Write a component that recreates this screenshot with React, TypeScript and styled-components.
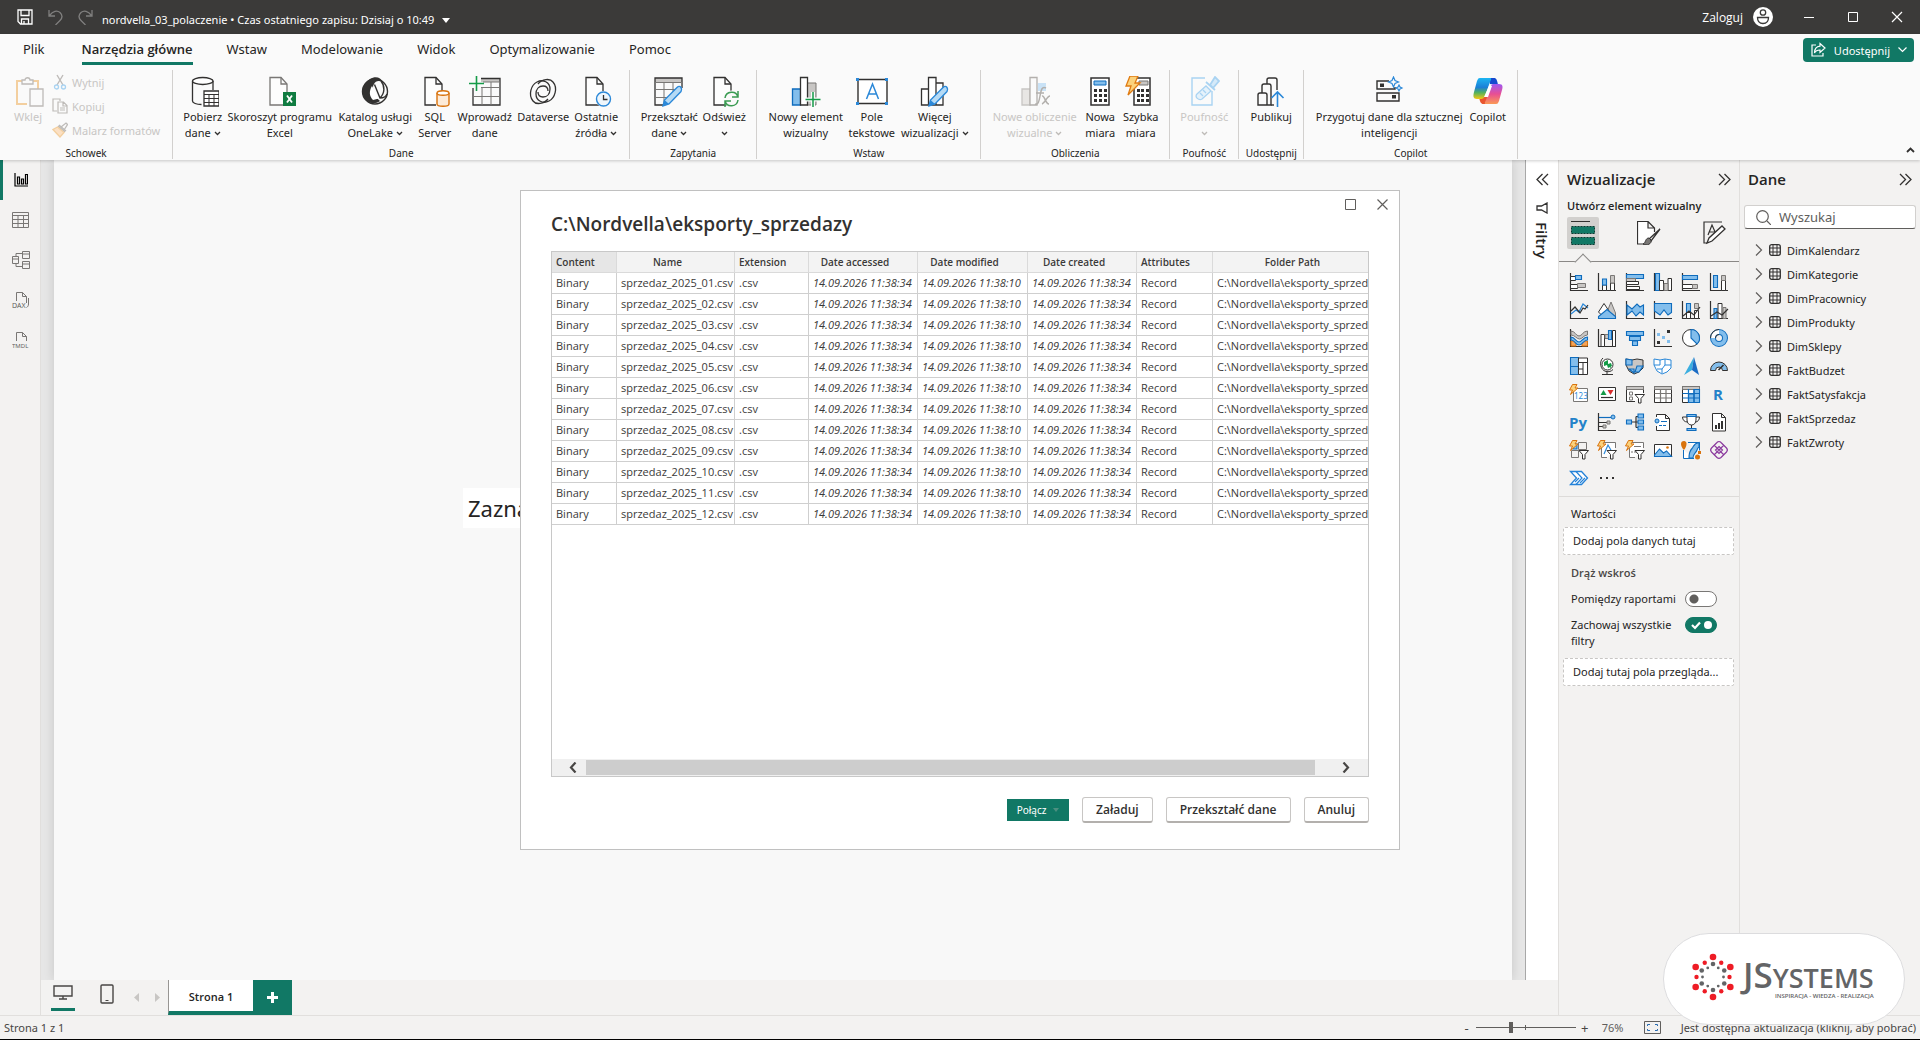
import React from "react";
import styled, { createGlobalStyle, css } from "styled-components";

const FONT = '"Noto Sans", "Open Sans", sans-serif';
const STRONG_FONT = '"Open Sans", "Noto Sans", sans-serif';
const GREEN = "#117865";
const INK = "#323130";
const BLUE = "#0f6cbd";
const SKY = "#83beec";
const GREY = "#c8c6c4";
const MID = "#797775";
const ORANGE = "#d9730d";

const GlobalStyle = createGlobalStyle`
  *, *::before, *::after { box-sizing: border-box; }
  body { margin: 0; font-family: ${FONT}; font-size: 11px; color: #252423; background: #f3f2f1; }
  button, input { font: inherit; color: inherit; }
  button { margin: 0; padding: 0; border: 0; background: none; cursor: pointer; }
  svg { display: block; flex: none; }
`;

const strong = css`
  font-family: ${STRONG_FONT};
  font-weight: 600;
`;

type IconProps = { w: number; h?: number; children: React.ReactNode };
const Icon = ({ w, h = w, children }: IconProps) => (
  <svg width={w} height={h} viewBox={`0 0 ${w} ${h}`} fill="none" aria-hidden="true">
    {children}
  </svg>
);

/* ---------- Shell ---------- */

const Shell = styled.div`
  display: flex;
  flex-direction: column;
  height: 100vh;
  overflow: hidden;
  background: #f3f2f1;
`;

const TitleBar = styled.header`
  display: flex;
  align-items: center;
  height: 34px;
  padding: 0 17px;
  background: #3b3a39;
  color: #fff;
`;

const QuickActions = styled.div`
  display: flex;
  align-items: center;
  gap: 15px;
`;

const QuickButton = styled.button`
  display: flex;
  opacity: ${(p: { disabled?: boolean }) => (p.disabled ? 0.35 : 1)};
`;

const FileTitle = styled.button`
  display: flex;
  align-items: center;
  gap: 8px;
  margin-left: 9px;
  padding-top: 6px;
  line-height: 16px;
`;

const Account = styled.button`
  display: flex;
  align-items: center;
  gap: 10px;
  margin-left: auto;
  font-family: ${STRONG_FONT};
  font-size: 12px;
`;

const WindowControls = styled.div`
  display: flex;
  align-items: center;
  gap: 32px;
  margin-left: 30px;
`;

const WindowButton = styled.button`
  display: flex;
`;

/* ---------- Ribbon ---------- */

const Ribbon = styled.section`
  position: relative;
  background: #fafafa;
  box-shadow: 0 1px 3px rgba(0, 0, 0, 0.2);
  z-index: 1;
`;

const TabRow = styled.nav`
  display: flex;
  align-items: flex-start;
  gap: 34px;
  height: 36px;
  padding: 0 6px 0 23px;
`;

const RibbonTab = styled.button<{ $active?: boolean; $wide?: boolean }>`
  height: 31px;
  margin-right: ${(p) => (p.$wide ? "3px" : "0")};
  padding-top: 3px;
  font-size: 13px;
  line-height: 25px;
  border-bottom: 3px solid ${(p) => (p.$active ? GREEN : "transparent")};
  ${(p) => p.$active && strong}
`;

const ShareButton = styled.button`
  display: flex;
  align-items: center;
  gap: 8px;
  height: 24px;
  margin: 4px 0 0 auto;
  padding: 0 7px;
  border-radius: 4px;
  background: ${GREEN};
  color: #fff;
`;

const RibbonBody = styled.div`
  display: flex;
  align-items: flex-start;
  height: 90px;
`;

const Group = styled.section<{ $pad?: number }>`
  display: flex;
  flex-direction: column;
  height: 89px;
  padding: 0 ${(p) => p.$pad ?? 8}px;
  border-right: 1px solid #d2d0ce;
`;

const GroupItems = styled.div`
  display: flex;
  flex: 1;
`;

const GroupLabel = styled.h2`
  margin: 0;
  font-size: 10px;
  font-weight: 400;
  line-height: 12px;
  text-align: center;
`;

const BigButton = styled.button<{ $w: number; $off?: boolean }>`
  display: flex;
  flex-direction: column;
  align-items: center;
  gap: 1px;
  width: ${(p) => p.$w}px;
  padding-top: 6px;
  white-space: nowrap;
  line-height: 16px;
  color: ${(p) => (p.$off ? "#c8c6c4" : "#252423")};
`;

const ButtonLine = styled.span`
  display: flex;
  align-items: center;
  justify-content: center;
  gap: 3px;
  height: 16px;
`;

const SmallStack = styled.div`
  display: flex;
  flex-direction: column;
  padding: 0 2px 0 6px;
`;

const SmallButton = styled.button`
  display: flex;
  align-items: center;
  gap: 4px;
  height: 24px;
  color: #c8c6c4;
  white-space: nowrap;
`;

const CollapseButton = styled.button`
  display: flex;
  align-self: flex-end;
  margin: 0 5px 7px auto;
`;

const DownMark = ({ color = INK }: { color?: string }) => (
  <Icon w={7} h={5}>
    <path d="M1 1l2.500 2.500L6 1" stroke={color} strokeWidth="1.300" />
  </Icon>
);

const Doc = ({ color = INK }: { color?: string }) => (
  <>
    <path d="M6 1.500h11l6 6.500v21H6z" fill="#fdfdfd" stroke={color} strokeWidth="1.300" />
    <path d="M17 1.500V8h6" stroke={color} strokeWidth="1.300" />
  </>
);

const Pencil = () => (
  <g transform="translate(9 8)">
    <path d="M1 22l1.500-6L15 3.500c1.500-1.500 3-1.500 4 0s1 2.500 0 4L7 20z" fill="#b5daf5" stroke="#2b88d8" strokeWidth="1.400" />
    <path d="M2.500 16L7 20l-6 2z" fill="#2b88d8" />
  </g>
);

const big: Record<string, React.ReactNode> = {
  paste: (
    <>
      <path d="M15 28H5V5h6M20 5h6v8" stroke="#f3cf9f" strokeWidth="2" />
      <path d="M10 8V4h3c0-3 5-3 5 0h3v4z" fill="#fafafa" stroke="#bebbb8" strokeWidth="1.300" />
      <path d="M18 13h13v17H18z" fill="#fafafa" stroke="#bebbb8" strokeWidth="1.300" />
    </>
  ),
  data: (
    <>
      <path d="M5.500 5v20c0 2 4 3.500 9 3.500M26 5v9" stroke={INK} strokeWidth="1.300" />
      <ellipse cx="15.750" cy="5" rx="10.250" ry="3.500" fill="#fff" stroke={INK} strokeWidth="1.300" />
      <path d="M17 15h15v15H17z" fill="#fff" stroke={INK} strokeWidth="1.300" />
      <path d="M17 18.500h15M17 22.500h15M17 26.500h15M22 18v12M27 18v12" stroke={INK} />
    </>
  ),
  excel: (
    <>
      <Doc color={MID} />
      <path d="M19 16h13v14H19z" fill="#107c41" />
      <path d="M23 19.500l5 7M28 19.500l-5 7" stroke="#fff" strokeWidth="1.800" />
    </>
  ),
  onelake: (
    <>
      <circle cx="16" cy="15.500" r="12.500" stroke={INK} strokeWidth="1.400" />
      <path d="M11 3C16 0 22 1 23.500 6c-4-2-7-1-8.500 2-3 4 1 13 6 17-4 3-9 3-13 0C1 20 2 8 11 3z" fill={INK} />
      <path d="M12.500 9c-4 4-4 11 1 16M15.500 8.500L21 22c3 0 6-1 7-4M22 5c4 5 4 12-1 17" stroke={INK} strokeWidth="1.400" />
      <path d="M13 10c-3 5-3 10 1 14l6-1.500z" fill="#fff" />
    </>
  ),
  sql: (
    <>
      <Doc />
      <path d="M17 17h13v13H17z" fill="#fafafa" />
      <path d="M18 17v11c0 3 12 3 12 0V17" fill="#fdebd8" stroke={ORANGE} strokeWidth="1.400" />
      <ellipse cx="24" cy="17" rx="6" ry="2.300" fill="#fff" stroke={ORANGE} strokeWidth="1.400" />
    </>
  ),
  enter: (
    <>
      <path d="M12 2h19v4H12z" fill={GREY} />
      <path d="M12 2.500h19V29H4V12" stroke={INK} strokeWidth="1.300" />
      <path d="M12 11.500h19M4 20.500h27M13 11v18M22 6v23M14 6h17" stroke={MID} />
      <path d="M7.500 0v15M0 7.500h15" stroke="#159b48" strokeWidth="1.600" />
    </>
  ),
  dataverse: (
    <>
      <path d="M21 23c-4 5-12 6-15 2C1 19 4 9 10 6c6-3 13 0 13 7 0 5-3 8-7 8-3 0-5-2-5-5" stroke={INK} strokeWidth="1.300" />
      <path d="M11 8c4-5 12-6 15-2 5 6 2 16-4 19-6 3-13 0-13-7 0-5 3-8 7-8 3 0 5 2 5 5" stroke={INK} strokeWidth="1.300" />
    </>
  ),
  recent: (
    <>
      <Doc />
      <circle cx="23.500" cy="23" r="8" fill="#fafafa" />
      <circle cx="23.500" cy="23" r="7" fill="#eef6fc" stroke="#2b88d8" strokeWidth="1.400" />
      <path d="M23.500 19v4.500h4" stroke={INK} strokeWidth="1.300" />
    </>
  ),
  transform: (
    <>
      <path d="M2 2h27v4H2z" fill={GREY} />
      <path d="M29 12V2H2v27h9" stroke={INK} strokeWidth="1.300" />
      <path d="M2 6.500h27M2 13.500h20M2 21.500h14M11 6v23M20 6v10" stroke={MID} />
      <Pencil />
    </>
  ),
  refresh: (
    <>
      <Doc />
      <circle cx="23.500" cy="23" r="8.500" fill="#fafafa" />
      <path d="M17 22c1-7 11-8 13-1M30 15v6h-6M30 24c-1 7-11 8-13 1M17 31v-6h6" stroke="#3a9b52" strokeWidth="1.500" />
    </>
  ),
  newVisual: (
    <>
      <path d="M17 7h9v22h-9z" fill={GREY} stroke={MID} />
      <path d="M2.500 13h8v16h-8z" fill={SKY} stroke={BLUE} strokeWidth="1.300" />
      <path d="M10.500 1.500h7V29h-7z" fill="#fff" stroke={INK} strokeWidth="1.300" />
      <path d="M23 16v15M15.500 23.500h15" stroke="#fafafa" strokeWidth="4" />
      <path d="M23 16v15M15.500 23.500h15" stroke="#159b48" strokeWidth="1.500" />
    </>
  ),
  textBox: (
    <>
      <path d="M2 3.500h29v24H2z" fill="#fff" stroke={INK} strokeWidth="1.400" />
      <path d="M0 2h3v3H0zM29 2h3v3h-3zM0 26h3v3H0zM29 26h3v3h-3z" fill="#2b88d8" />
      <path d="M10.500 23L16.500 8l6 15M12.500 18h8" stroke="#2b88d8" strokeWidth="1.500" />
    </>
  ),
  moreVisuals: (
    <>
      <path d="M2.500 13h7v16h-7zM17 7h7v22h-7zM9.500 1.500H17V29H9.500z" fill="#fff" stroke={INK} strokeWidth="1.300" />
      <Pencil />
    </>
  ),
  newCalc: (
    <>
      <path d="M19 7h8v8h-8z" fill="#c9e2f6" />
      <path d="M3 13h8v16H3z" fill="#e8e6e4" stroke={GREY} strokeWidth="1.300" />
      <path d="M11 1.500h7V29h-7z" fill="#fafafa" stroke="#b3b0ad" strokeWidth="1.300" />
      <path d="M27 12c-4-2-5 2-6 8s-2 9-5 8M17 17h8M23 20c3-1 3 8 7 8M31 20c-3 0-5 7-8 8" stroke="#b3b0ad" strokeWidth="1.500" />
    </>
  ),
  measure: (
    <>
      <path d="M7 2h18v27H7z" fill="#fff" stroke={INK} strokeWidth="1.500" />
      <path d="M10 5h12v4H10z" fill={SKY} stroke={BLUE} />
      <path d="M10 13h3v3h-3zM15 13h3v3h-3zM20 13h3v3h-3zM10 18h3v3h-3zM15 18h3v3h-3zM20 18h3v3h-3zM10 23h3v3h-3zM15 23h3v3h-3zM20 23h3v3h-3z" fill={INK} />
    </>
  ),
  quick: (
    <>
      <path d="M9 2h16v27H9z" fill="#fff" stroke={INK} strokeWidth="1.500" />
      <path d="M14 5h9v4h-9z" fill={GREY} stroke={MID} />
      <path d="M12 13h3v3h-3zM16 13h3v3h-3zM21 13h3v3h-3zM12 18h3v3h-3zM16 18h3v3h-3zM21 18h3v3h-3zM12 23h3v3h-3zM16 23h3v3h-3zM21 23h3v3h-3z" fill={INK} />
      <path d="M5 0h8l-3 7h5L3 19l3-9H1z" fill="#fbd27c" stroke="#e07b12" strokeWidth="1.300" />
    </>
  ),
  sensitivity: (
    <>
      <path d="M17 2H4v27h20V15" stroke="#a9d3f2" strokeWidth="1.400" />
      <path d="M9 18l9-8 5 5-9 8c-3 2-8-2-5-5z" fill="#e5f2fb" stroke="#a9d3f2" strokeWidth="1.300" />
      <path d="M12 17l3 3M15 14l3 3" stroke="#a9d3f2" strokeWidth="1.300" />
      <path d="M18 6l9 8M22 9l5-8 4 4-6 7z" fill="#d5eaf9" stroke="#a9d3f2" strokeWidth="1.800" />
    </>
  ),
  publish: (
    <>
      <path d="M3 29V19c0-1 1-2 2-2h5c1 0 2 1 2 2v10zM7 17v-7c0-1 1-2 2-2h5c1 0 2 1 2 2v19h-4M12 8V4c0-1 1-2 2-2h6c1 0 2 1 2 2v10" stroke={INK} strokeWidth="1.400" />
      <path d="M16 29h3" stroke={INK} strokeWidth="1.400" />
      <path d="M22.500 31V16M16.500 22l6-6 6 6" stroke="#2b88d8" strokeWidth="1.600" />
    </>
  ),
  prepare: (
    <>
      <path d="M16 5H4v8h18v-2M4 17h22v8H4z" stroke={INK} strokeWidth="1.400" />
      <path d="M7 7.500h4v3.500H7zM19 19h4v3.500h-4z" fill={INK} />
      <path d="M20.500 1l1.500 3.500L25.500 6 22 7.500 20.500 11 19 7.500 15.500 6 19 4.500zM26 9l1 2 2 1-2 1-1 2-1-2-2-1 2-1z" stroke="#2b88d8" strokeWidth="1.200" />
    </>
  ),
  copilot: (
    <>
      <defs>
        <linearGradient id="cpA" x1="0" y1="0" x2="0" y2="1">
          <stop offset="0" stopColor="#1cb5f2" />
          <stop offset="0.450" stopColor="#1b7fd6" />
          <stop offset="0.700" stopColor="#55b25c" />
          <stop offset="1" stopColor="#f6c711" />
        </linearGradient>
        <linearGradient id="cpB" x1="0" y1="0" x2="0" y2="1">
          <stop offset="0" stopColor="#9e58f2" />
          <stop offset="0.500" stopColor="#e84f93" />
          <stop offset="1" stopColor="#fb9a55" />
        </linearGradient>
      </defs>
      <path d="M17 2h5c2 0 3 1 4 7l-8-1z" fill="#1549cf" />
      <path d="M15 28h-4c-2 0-3-2-4-7l9-1z" fill="#e9552f" />
      <path d="M8 2h10c2 0 1 2 0 4l-5 14c-1 2-2 3-4 3H5c-4 0-4-3-3-7l3-11c1-2 1-3 3-3z" fill="url(#cpA)" />
      <path d="M24 28H14c-2 0-1-2 0-4l5-14c1-2 2-2 4-2h4c4 0 4 3 3 6l-3 11c-1 2-1 3-3 3z" fill="url(#cpB)" />
      <path d="M17 10h3l-4 11h-4z" fill="#fff" />
    </>
  ),
};

type RibbonItem = { icon: string; w: number; lines: string[]; menu?: boolean; off?: boolean };
const ribbonGroups: { label: string; pad?: number; items: RibbonItem[] }[] = [
  {
    label: "Dane",
    items: [
      { icon: "data", w: 43, lines: ["Pobierz", "dane"], menu: true },
      { icon: "excel", w: 111, lines: ["Skoroszyt programu", "Excel"] },
      { icon: "onelake", w: 80, lines: ["Katalog usługi", "OneLake"], menu: true },
      { icon: "sql", w: 39, lines: ["SQL", "Server"] },
      { icon: "enter", w: 61, lines: ["Wprowadź", "dane"] },
      { icon: "dataverse", w: 56, lines: ["Dataverse"] },
      { icon: "recent", w: 50, lines: ["Ostatnie", "źródła"], menu: true },
    ],
  },
  {
    label: "Zapytania",
    items: [
      { icon: "transform", w: 62, lines: ["Przekształć", "dane"], menu: true },
      { icon: "refresh", w: 48, lines: ["Odśwież", ""], menu: true },
    ],
  },
  {
    label: "Wstaw",
    items: [
      { icon: "newVisual", w: 81, lines: ["Nowy element", "wizualny"] },
      { icon: "textBox", w: 51, lines: ["Pole", "tekstowe"] },
      { icon: "moreVisuals", w: 75, lines: ["Więcej", "wizualizacji"], menu: true },
    ],
  },
  {
    label: "Obliczenia",
    items: [
      { icon: "newCalc", w: 91, lines: ["Nowe obliczenie", "wizualne"], menu: true, off: true },
      { icon: "measure", w: 40, lines: ["Nowa", "miara"] },
      { icon: "quick", w: 41, lines: ["Szybka", "miara"] },
    ],
  },
  { label: "Poufność", items: [{ icon: "sensitivity", w: 52, lines: ["Poufność", ""], menu: true, off: true }] },
  { label: "Udostępnij", pad: 4, items: [{ icon: "publish", w: 56, lines: ["Publikuj"] }] },
  {
    label: "Copilot",
    items: [
      { icon: "prepare", w: 154, lines: ["Przygotuj dane dla sztucznej", "inteligencji"] },
      { icon: "copilot", w: 43, lines: ["Copilot"] },
    ],
  },
];

const RibbonView = () => (
  <Ribbon>
    <TabRow>
      <RibbonTab $wide>Plik</RibbonTab>
      <RibbonTab $active>Narzędzia główne</RibbonTab>
      {["Wstaw", "Modelowanie", "Widok", "Optymalizowanie", "Pomoc"].map((t) => (
        <RibbonTab key={t}>{t}</RibbonTab>
      ))}
      <ShareButton>
        <Icon w={16}>
          <path d="M6 3H2v11h11v-3" stroke="#fff" strokeWidth="1.200" />
          <path d="M10 1.500l5 4.500-5 4.500V8C7 8 5.500 9 4.500 11 4.500 7 7 4.500 10 4.200z" stroke="#fff" strokeWidth="1.200" />
        </Icon>
        Udostępnij
        <Icon w={9} h={6}>
          <path d="M.5 .5l4 4 4-4" stroke="#fff" strokeWidth="1.200" />
        </Icon>
      </ShareButton>
    </TabRow>
    <RibbonBody>
      <Group $pad={10}>
        <GroupItems>
          <BigButton $w={36} $off>
            <Icon w={32}>{big.paste}</Icon>
            <ButtonLine>Wklej</ButtonLine>
          </BigButton>
          <SmallStack>
            <SmallButton>
              <Icon w={16}>
                <path d="M5 1l6 10M11 1L5 11" stroke="#bebbb8" strokeWidth="1.400" />
                <circle cx="4.500" cy="13" r="2" stroke="#a9d3f2" strokeWidth="1.300" />
                <circle cx="11.500" cy="13" r="2" stroke="#a9d3f2" strokeWidth="1.300" />
              </Icon>
              Wytnij
            </SmallButton>
            <SmallButton>
              <Icon w={16}>
                <path d="M5 13H1V1h7v2" stroke="#bebbb8" strokeWidth="1.200" />
                <path d="M6 4h5.500L15 7.500V15H6zM11 4v4h4M8 10h5M8 12h5" stroke="#bebbb8" strokeWidth="1.200" />
              </Icon>
              Kopiuj
            </SmallButton>
            <SmallButton>
              <Icon w={16}>
                <path d="M9 5l5-4 1.500 1.500L12 8" stroke="#bebbb8" strokeWidth="1.300" />
                <path d="M6 4l7 6M7 3l7 6" stroke="#bebbb8" strokeWidth="1.300" />
                <path d="M5.500 5L1 7.500 8 15l4-4.500z" fill="#fbe0c4" stroke="#f3cf9f" strokeWidth="1.300" />
              </Icon>
              Malarz formatów
            </SmallButton>
          </SmallStack>
        </GroupItems>
        <GroupLabel>Schowek</GroupLabel>
      </Group>
      {ribbonGroups.map((g) => (
        <Group key={g.label} $pad={g.pad}>
          <GroupItems>
            {g.items.map((it) => (
              <BigButton key={it.icon} $w={it.w} $off={it.off}>
                <Icon w={32}>{big[it.icon]}</Icon>
                <span>
                  {it.lines.map((line, i) => (
                    <ButtonLine key={i}>
                      {line}
                      {it.menu && i === it.lines.length - 1 && <DownMark color={it.off ? "#bebbb8" : INK} />}
                    </ButtonLine>
                  ))}
                </span>
              </BigButton>
            ))}
          </GroupItems>
          <GroupLabel>{g.label}</GroupLabel>
        </Group>
      ))}
      <CollapseButton aria-label="Zwiń wstążkę">
        <Icon w={9} h={6}>
          <path d="M1 5l3.500-3.500L8 5" stroke={INK} strokeWidth="1.800" />
        </Icon>
      </CollapseButton>
    </RibbonBody>
  </Ribbon>
);

/* ---------- Workspace ---------- */

const Workspace = styled.main`
  display: flex;
  flex: 1;
  min-height: 0;
`;

const SideNav = styled.nav`
  display: flex;
  flex-direction: column;
  width: 41px;
  border-right: 1px solid #e1dfdd;
`;

const SideButton = styled.button<{ $active?: boolean }>`
  display: flex;
  align-items: center;
  justify-content: center;
  height: 40px;
  padding-right: 2px;
  border-left: 3px solid ${(p) => (p.$active ? GREEN : "transparent")};
`;

const Center = styled.div`
  display: flex;
  flex: 1;
  flex-direction: column;
  min-width: 0;
`;

const CanvasRow = styled.div`
  display: flex;
  flex: 1;
  min-height: 0;
`;

const Canvas = styled.section`
  display: flex;
  flex: 1;
  padding: 0 13px;
  background: #e6e6e6;
  border-right: 1px solid #a8a8a8;
  overflow: hidden;
`;

const ReportPage = styled.div`
  position: relative;
  flex: 1;
  background: #f8f8f8;
  box-shadow: 0 0 10px rgba(0, 0, 0, 0.14);
`;

const CanvasText = styled.p`
  position: absolute;
  left: 409px;
  top: 328px;
  margin: 0;
  padding: 0 5px;
  height: 40px;
  background: #fff;
  font-size: 22px;
  line-height: 40px;
`;

const FilterPane = styled.aside`
  display: flex;
  flex-direction: column;
  align-items: center;
  gap: 16px;
  width: 33px;
  padding-top: 13px;
  background: #fff;
  border-right: 1px solid #e1dfdd;
`;

const FilterTitle = styled.h2`
  display: flex;
  align-items: center;
  gap: 8px;
  margin: 0;
  writing-mode: vertical-rl;
  font-size: 15px;
  line-height: 20px;
  ${strong}
`;

const PageBar = styled.div`
  display: flex;
  height: 35px;
  padding-left: 10px;
  border-right: 1px solid #e1dfdd;
`;

const ViewButtons = styled.div`
  display: flex;
  gap: 20px;
  margin-right: 7px;
`;

const ViewButton = styled.button<{ $active?: boolean }>`
  display: flex;
  align-items: center;
  justify-content: center;
  width: 24px;
  height: 31px;
  padding-bottom: ${(p) => (p.$active ? "3px" : "0")};
  border-bottom: 3px solid ${(p) => (p.$active ? GREEN : "transparent")};
`;

const PagerButton = styled.button`
  display: flex;
  align-items: center;
  justify-content: center;
  width: 21px;
`;

const PageTab = styled.button`
  width: 85px;
  padding-top: 2px;
  background: #fff;
  border-left: 1px solid #979593;
  border-bottom: 4px solid ${GREEN};
  ${strong}
`;

const AddPage = styled.button`
  display: flex;
  align-items: center;
  justify-content: center;
  width: 39px;
  background: ${GREEN};
`;

/* ---------- Right panes ---------- */

const Pane = styled.aside`
  display: flex;
  flex-direction: column;
  width: 181px;
  border-right: 1px solid #e1dfdd;

  &:last-child {
    width: 180px;
    border-right: 0;
  }
`;

const PaneHead = styled.div`
  display: flex;
  align-items: center;
  justify-content: space-between;
  height: 38px;
  padding: 0 8px;
`;

const PaneTitle = styled.h2`
  margin: 0;
  font-size: 15px;
  line-height: 20px;
  ${strong}
`;

const PlainButton = styled.button`
  display: flex;
`;

const SubTitle = styled.h3`
  margin: 0 8px;
  font-size: 11px;
  line-height: 16px;
  ${strong}
`;

const ModeRow = styled.div`
  display: flex;
  justify-content: space-between;
  margin-top: 3px;
  padding: 0 8px;
`;

const ModeButton = styled.button<{ $active?: boolean }>`
  display: flex;
  align-items: center;
  justify-content: center;
  width: 32px;
  height: 32px;
  border-radius: 2px;
  background: ${(p) => (p.$active ? "#d2d0ce" : "transparent")};
`;

const Notch = styled.div`
  position: relative;
  height: 13px;
  border-bottom: 1px solid #8a8886;

  &::after {
    content: "";
    position: absolute;
    left: 18px;
    top: 7px;
    width: 12px;
    height: 12px;
    background: #f3f2f1;
    border: solid #8a8886;
    border-width: 1px 0 0 1px;
    transform: rotate(45deg);
  }
`;

const VisualGrid = styled.div`
  display: grid;
  grid-template-columns: repeat(6, 18px);
  gap: 10px;
  padding: 11px 11px 9px;
  border-bottom: 1px solid #dddbd9;
`;

const FieldWells = styled.section`
  display: flex;
  flex-direction: column;
  padding: 9px 5px 0 4px;
`;

const WellLabel = styled.h3<{ $strong?: boolean }>`
  margin: 0 8px;
  font-size: 11px;
  line-height: 16px;
  font-weight: 400;
  ${(p) =>
    p.$strong &&
    css`
      ${strong}
      color: #484644;
      margin-top: 10px;
    `}
`;

const DropWell = styled.div<{ $top: number }>`
  margin-top: ${(p) => p.$top}px;
  padding: 0 9px;
  height: 28px;
  border: 1px dashed #c8c6c4;
  border-radius: 2px;
  background: #fff;
  line-height: 26px;
  white-space: nowrap;
  overflow: hidden;
`;

const ToggleRow = styled.label`
  display: flex;
  justify-content: space-between;
  margin: 10px 17px 0 8px;
  line-height: 16px;
`;

const ToggleText = styled.span`
  width: 108px;
`;

const Toggle = styled.input`
  appearance: none;
  flex: none;
  width: 32px;
  height: 16px;
  margin: 0;
  border: 1px solid #797775;
  border-radius: 8px;
  background: radial-gradient(circle at 8px 7px, #605e5c 4px, transparent 5px) #fff;

  &:checked {
    border-color: ${GREEN};
    background: url("data:image/svg+xml,%3Csvg xmlns='http://www.w3.org/2000/svg' width='30' height='14'%3E%3Cpath d='M6 7l3 3 5-5.500' fill='none' stroke='white' stroke-width='2.200'/%3E%3Ccircle cx='22' cy='7' r='4' fill='white'/%3E%3C/svg%3E") ${GREEN};
  }
`;

const SearchBox = styled.label`
  display: flex;
  align-items: center;
  gap: 8px;
  height: 24px;
  margin: 7px 4px 9px;
  padding: 0 11px;
  background: #fff;
  border: 1px solid #d2d0ce;
  border-bottom-color: #605e5c;
  border-radius: 3px;
`;

const SearchInput = styled.input`
  flex: 1;
  min-width: 0;
  padding: 0;
  border: 0;
  outline: 0;
  background: none;
  font-size: 13px;
  &::placeholder { color: #605e5c; opacity: 1; }
`;

const TreeList = styled.ul`
  margin: 0;
  padding: 0;
  list-style: none;
`;

const TreeRow = styled.button`
  display: flex;
  align-items: center;
  gap: 6px;
  width: 100%;
  height: 24px;
  padding-left: 15px;
`;

const Chevrons = ({ left }: { left?: boolean }) => (
  <Icon w={13} h={13}>
    <path d={left ? "M6.500 1L1 6.500l5.500 5.500M12 1L6.500 6.500 12 12" : "M1 1l5.500 5.500L1 12M6.500 1L12 6.500 6.500 12"} stroke={INK} strokeWidth="1.300" />
  </Icon>
);

const Bolt = () => <path d="M2.500-.5H7L5 3h3L.5 9.500 2.500 5H-.5z" fill="#fbd27c" stroke={ORANGE} />;
const Funnel = () => <path d="M9 9.500h9.500l-3.500 4V18h-2.500v-4.500z" fill="#fff" stroke={INK} />;
const Axis = () => <path d="M.5 0v17.500H18" stroke={INK} strokeWidth="1.200" />;
const B = ({ d }: { d: string }) => <path d={d} fill={SKY} stroke={BLUE} strokeWidth="1.100" />;
const G = ({ d }: { d: string }) => <path d={d} fill={GREY} stroke={MID} />;
const W = ({ d }: { d: string }) => <path d={d} fill="#fff" stroke={INK} />;
const L = ({ d, c = INK }: { d: string; c?: string }) => <path d={d} stroke={c} strokeWidth="1.200" />;

const visuals: [string, React.ReactNode][] = [
  ["Skumulowany słupkowy", <><Axis /><W d="M.5 3.500h5v4h-5zM.5 11.500h7v4h-7z" /><B d="M5.500 2.500h6v4h-6z" /><G d="M7.500 10.500h8v4h-8z" /></>],
  ["Skumulowany kolumnowy", <><Axis /><W d="M4.500 12h4v5.500h-4zM12.500 10h4v7.500h-4z" /><B d="M4.500 6h4v6h-4z" /><G d="M12.500 2.500h4V10h-4z" /></>],
  ["Grupowany słupkowy", <><Axis /><B d="M.5 1.500h17v4H.5z" /><G d="M.5 5.500h9v3h-9z" /><W d="M.5 8.500h12v3H.5zM.5 13.500h13v3H.5z" /></>],
  ["Grupowany kolumnowy", <><Axis /><B d="M1.500.5h4v17h-4z" /><W d="M5.500 7.500h4v10h-4zM14 5.500h3.500v12H14z" /><G d="M10 10.500h4v7h-4z" /></>],
  ["100% słupkowy", <><Axis /><B d="M.5 2.500h15v4H.5z" /><W d="M.5 11.500h10v4H.5z" /><G d="M10.500 11.500h5v4h-5z" /></>],
  ["100% kolumnowy", <><Axis /><B d="M3.500 2.500h4v12h-4z" /><W d="M11.500 7.500h4v10h-4z" /><G d="M11.500 2.500h4v5h-4z" /></>],
  ["Liniowy", <><Axis /><L c="#2b88d8" d="M1 13l5-4 3 2 4-8 5 4" /><L d="M1 10l4-4 5 6 3-5 2 1 3-4" /></>],
  ["Warstwowy", <><G d="M9 11l4-10 4.500 11v5z" /><W d="M.5 11L6 2.500l6 9-6 5z" /><B d="M.5 17.500v-2L9 8.500l8.500 7v2z" /></>],
  ["Skumulowany warstwowy", <><Axis /><B d="M1 4l5 4 5-5 3 3 3.500-2v10L14 11l-4 4-4-5-5 4z" /></>],
  ["100% warstwowy", <><Axis /><B d="M.5 2.500h17v9L14 14l-4-5-4 5-5.500-4z" /></>],
  ["Liniowy i kolumnowy", <><Axis /><B d="M4.500 2.500h4v9h-4z" /><W d="M4.500 11.500h4v6h-4zM12.500 9.500h4v8h-4z" /><G d="M12.500 2.500h4v5h-4z" /><L d="M1 15l6-5 5 4 6-8" /></>],
  ["Liniowy i grupowany", <><Axis /><B d="M4 7.500h3v10H4z" /><W d="M8 2.500h4v15H8z" /><G d="M13 6.500h3v11h-3z" /><L d="M1 15l6-4 5 3 6-6" /></>],
  ["Wstążkowy", <><Axis /><G d="M1 2c4 0 5 5 8 5s4-5 8.500-5v4c-4 0-5 4-8 4S5 6 1 6z" /><path d="M1 12h5v5H1zM12 12h5.500v5H12z" fill="#f2a35a" stroke={ORANGE} /><B d="M1 8c4 0 5 5 8 5s4-5 8.500-5v3c-4 0-5 5-8.500 5s-4-5-8-5z" /></>],
  ["Kaskadowy", <><Axis /><W d="M3 5.500h3.500v12H3zM14.500 1.500h3v16h-3z" /><G d="M7 5.500h3.500v4H7z" /><B d="M10.500 1.500h3v9h-3z" /></>],
  ["Lejek", <><B d="M.5 2.500h17v4H.5zM3.500 7.500h11v4h-11zM6.500 12h5v4.500h-5z" /></>],
  ["Punktowy", <><Axis /><path d="M3 4h3v3H3zM8 7h3v3H8zM13 11h3v3h-3z" fill={SKY} /><path d="M13 1h3v3h-3zM3 12h3v3H3z" fill={INK} /></>],
  ["Kołowy", <><circle cx="9" cy="9" r="8.500" fill="#fff" stroke={INK} /><B d="M9 .5a8.500 8.500 0 0 1 6 14.500L9 9z" /></>],
  ["Pierścieniowy", <><circle cx="9" cy="9" r="6" stroke={BLUE} strokeWidth="6" /><circle cx="9" cy="9" r="6" stroke={SKY} strokeWidth="4" /><path d="M3 9a6 6 0 0 1 6-6" stroke="#fff" strokeWidth="4" /><path d="M.5 9A8.500 8.500 0 0 1 9 .5M5.500 9A3.500 3.500 0 0 1 9 5.500" stroke={INK} /></>],
  ["Mapa drzewa", <><B d="M.5.5h8v9h-8zM.5 9.500h8v8h-8z" /><W d="M8.500 1h9v16.500h-9zM8.500 5.500h9M13 5.500v12M8.500 12H13" /></>],
  ["Mapa", <><circle cx="9.500" cy="7.500" r="5.500" fill="#fff" stroke={INK} /><path d="M6 5l4-2v4l3-1 1 3-4 2-1-3-3 1zM10 9h3v2z" fill="#159b48" /><path d="M5 1C1 4 2 13 8 14.500c3 .5 5 0 7-2M9 15v2.500M4 17.500h11" stroke={INK} /></>],
  ["Kartogram", <><path d="M0 2l6 1 5-1 6 1v8l-4 4-5 2-5-3-3-6z" fill={GREY} stroke={INK} /><B d="M0 2l6 1v5H0zM11 9h6l-4 6h-4zM3 12h5v4z" /></>],
  ["Mapa kształtów", <><path d="M0 2l6 1 5-1 6 1v8l-4 4-5 2-5-3-3-6z" fill="#fff" stroke="#2b88d8" /><path d="M6 3v5H0M11 2v6h6M3 12h5v4M8 12l3-4" stroke="#2b88d8" /></>],
  ["Azure Maps", <><path d="M12 0L2 18l8-5z" fill="#3aaee0" /><path d="M12 0l5 18-7-5z" fill="#1b6cc4" /></>],
  ["Miernik", <><path d="M.5 13.500a8.500 8.500 0 0 1 17 0h-5a3.500 3.500 0 0 0-7 0z" fill={SKY} stroke={INK} /><path d="M8.500 13l5-5" stroke={INK} strokeWidth="1.600" /></>],
  ["Karta", <><path d="M3.500 3.500h14v13h-14z" fill="#fff" stroke={MID} /><text x="4" y="14" fontFamily={FONT} fontSize="8" fill="#2b88d8">123</text><Bolt /></>],
  ["KPI", <><W d="M.5 2.500h17v13H.5z" /><path d="M2.500 10l3-5 3 5z" fill="#159b48" /><path d="M9.500 5h6l-3 5z" fill="#d92c2c" /><L d="M3 12.500h12" /></>],
  ["Fragmentator", <><path d="M17.500 8V1.500H.5v15H9" fill="#fff" stroke={INK} /><G d="M.5 1.500h17v3H.5z" /><path d="M3.500 7h3v3h-3zM3.500 12h3v3h-3z" stroke={MID} /><Funnel /></>],
  ["Tabela", <><W d="M.5 1.500h17v16H.5z" /><G d="M.5 1.500h17v3H.5z" /><L d="M.5 8.500h17M.5 13h17M6.500 4v13M12 4v13" c={MID} /></>],
  ["Macierz", <><W d="M.5 1.500h17v16H.5z" /><G d="M.5 1.500h17v3H.5z" /><B d="M12 4.500h5.500v13H12zM6.500 9H12v8.500H6.500z" /><L d="M.5 8.500h17M.5 13h17M6.500 4v13M12 4v13" c={BLUE} /></>],
  ["Skrypt R", <text x="3" y="14.500" fontFamily={STRONG_FONT} fontSize="15" fontWeight="700" fill="#2482c9">R</text>],
  ["Skrypt Python", <text x="-1" y="14.500" fontFamily={STRONG_FONT} fontSize="15" fontWeight="700" fill="#2482c9">Py</text>],
  ["Kluczowe elementy", <><Axis /><L d="M1 4.500h12" c={BLUE} /><circle cx="15" cy="4" r="2" fill={SKY} stroke={BLUE} /><L d="M1 9.500h8M1 13.500h4" /><G d="M9 8h3v3H9zM5 12h3v3H5z" /></>],
  ["Drzewo dekompozycji", <><L d="M5 9h7M10 3.500v11M10 3.500h2M10 14.500h2" /><B d="M.5 7h5v4h-5zM12 1h5.500v4H12zM12 7h5.500v4H12zM12 13h5.500v4H12z" /></>],
  ["Pytania i odpowiedzi", <><path d="M2.500 4V1.500h9l4 4v12h-13V13M11.500 1.500v4h4" fill="#fff" stroke={INK} /><circle cx="3" cy="8" r="2" fill={SKY} stroke={BLUE} /><L d="M7 8.500h6M5 12.500h3M9 12.500h3" c={BLUE} /></>],
  ["Cel", <><W d="M5 1.500h9V7c0 3-2 5-4.500 5S5 10 5 7zM5 4H.5c0 3 2 5 5 5M14 4h3.500c0 3-2 5-4 5M9.500 12v4" /><B d="M5 1.500h9v2H5zM5 15.500h9v2H5z" /></>],
  ["Raport podzielony", <><W d="M2.500.5h9l4 4v13.500h-13zM11.500.5v4h4" /><path d="M5 12h2v4H5zM8 10h2v6H8zM11 8h2v8h-2z" fill={INK} /></>],
  ["Fragmentator przyciskowy", <><path d="M8.500 1.500h8v7h-8zM1.500 9.500h7v7h-7z" stroke={MID} /><B d="M3 3h4v5H3z" /><Bolt /><Funnel /></>],
  ["Fragmentator tekstu", <><path d="M17.500 7V1.500h-14v15H9" fill="#fff" stroke={MID} /><L d="M6 13l4-9 4 7" c="#2b88d8" /><Bolt /><Funnel /></>],
  ["Fragmentator listy", <><path d="M17.500 7V1.500h-14v15H9" fill="#fff" stroke={MID} /><L d="M8 5.500h7M5 11h2M8 11h3" c={MID} /><Bolt /><Funnel /></>],
  ["Obraz", <><W d="M.5 3.500h17v12H.5z" /><B d="M.5 14l5-6 4 4 3-2 5 5.500H.5z" /><circle cx="13.500" cy="6.500" r="1.300" fill={ORANGE} /></>],
  ["Mapa ArcGIS", <><path d="M6 1.500h11.500v8M12 17.500H1.500V9" fill="#fff" stroke={BLUE} /><B d="M17 1.500c-6 1-5 4-7 6s-3 4-3 9.500h4c0-4 3-5 4-8 .500-2 2-3 2-3z" /><path d="M2 0a2.500 2.500 0 0 1 2.500 3c0 3-2.500 6-2.500 6S-1 6-1 3a3 3 0 0 1 3-3zM16 10h3v3h-3z" fill={ORANGE} /><circle cx="15.500" cy="16" r="2.500" fill={ORANGE} /></>],
  ["Power Apps", <path d="M9 .5a3 3 0 0 1 2 1l5.500 5.500a3 3 0 0 1 0 4L11 16.500a3 3 0 0 1-4 0L1.500 11a3 3 0 0 1 0-4L7 1.500a3 3 0 0 1 2-1zM4.500 4.500l9 9M13.500 4.500l-9 9M9 5.500L12.500 9 9 12.500 5.500 9z" stroke="#8b3a9e" strokeWidth="1.200" />],
  ["Power Automate", <><path d="M.5 2.500h11L17.500 9l-6 6.500H.5L6.500 9z" fill="#fff" stroke="#2482d8" strokeWidth="1.300" /><path d="M6 2.500l6 6.500-6 6.500M5 13l4-4M10 14l5-5" stroke="#2482d8" strokeWidth="1.200" /></>],
  ["Więcej wizualizacji", <path d="M2 8h2v2H2zM8 8h2v2H8zM14 8h2v2h-2z" fill={INK} />],
];

const tables = ["DimKalendarz", "DimKategorie", "DimPracownicy", "DimProdukty", "DimSklepy", "FaktBudzet", "FaktSatysfakcja", "FaktSprzedaz", "FaktZwroty"];

const VisualPane = () => (
  <Pane>
    <PaneHead>
      <PaneTitle>Wizualizacje</PaneTitle>
      <PlainButton aria-label="Zwiń wizualizacje"><Chevrons /></PlainButton>
    </PaneHead>
    <SubTitle>Utwórz element wizualny</SubTitle>
    <ModeRow>
      <ModeButton $active aria-label="Utwórz element wizualny">
        <Icon w={24}>
          <path d="M0 .5h19" stroke={INK} />
          <path d="M.5 5.500h23v7H.5zM.5 16.500h23v7H.5z" fill={GREEN} stroke="#0b3b32" strokeDasharray="2 1" />
        </Icon>
      </ModeButton>
      <ModeButton aria-label="Formatuj stronę">
        <Icon w={24}>
          <path d="M8 23H.5V.5H11L17.500 7v4M11 .5V7h6.500" fill="#fff" stroke={INK} strokeWidth="1.200" />
          <path d="M23 8L12 18l2 2z" stroke={INK} strokeWidth="1.300" />
          <path d="M12 17c-4 0-3 5-6 6 4 2 9 0 8-4z" fill={MID} stroke={INK} />
        </Icon>
      </ModeButton>
      <ModeButton aria-label="Analiza">
        <Icon w={24}>
          <path d="M19 1H1v21h3" stroke={INK} strokeWidth="1.200" />
          <path d="M5 14l4-10 4 9M6 11h6" stroke={INK} strokeWidth="1.200" />
          <path d="M4 22l2-5L19 5l3 3L9 20z" fill="#fff" stroke={INK} strokeWidth="1.300" />
        </Icon>
      </ModeButton>
    </ModeRow>
    <Notch />
    <VisualGrid>
      {visuals.map(([name, art]) => (
        <PlainButton key={name} aria-label={name}>
          <svg width="18" height="18" viewBox="0 0 18 18" fill="none" overflow="visible">{art}</svg>
        </PlainButton>
      ))}
    </VisualGrid>
    <FieldWells>
      <WellLabel>Wartości</WellLabel>
      <DropWell $top={5}>Dodaj pola danych tutaj</DropWell>
      <WellLabel $strong>Drąż wskroś</WellLabel>
      <ToggleRow>
        <ToggleText>Pomiędzy raportami</ToggleText>
        <Toggle type="checkbox" role="switch" />
      </ToggleRow>
      <ToggleRow>
        <ToggleText>Zachowaj wszystkie filtry</ToggleText>
        <Toggle type="checkbox" role="switch" defaultChecked />
      </ToggleRow>
      <DropWell $top={9}>Dodaj tutaj pola przegląda...</DropWell>
    </FieldWells>
  </Pane>
);

const DataPane = () => (
  <Pane>
    <PaneHead>
      <PaneTitle>Dane</PaneTitle>
      <PlainButton aria-label="Zwiń dane"><Chevrons /></PlainButton>
    </PaneHead>
    <SearchBox>
      <Icon w={15}>
        <circle cx="6.500" cy="6.500" r="5.800" stroke="#605e5c" strokeWidth="1.200" />
        <path d="M11 11l4 4" stroke="#605e5c" strokeWidth="1.200" />
      </Icon>
      <SearchInput type="search" placeholder="Wyszukaj" aria-label="Wyszukaj" />
    </SearchBox>
    <TreeList>
      {tables.map((t) => (
        <li key={t}>
          <TreeRow>
            <Icon w={8} h={12}>
              <path d="M1 .5L6.500 6 1 11.500" stroke="#605e5c" strokeWidth="1.200" />
            </Icon>
            <Icon w={12}>
              <rect x=".7" y=".7" width="10.600" height="10.600" rx="2" stroke={INK} strokeWidth="1.300" />
              <path d="M.5 4h11M.5 8h11M4 .5v11M8 .5v11" stroke={INK} />
            </Icon>
            {t}
          </TreeRow>
        </li>
      ))}
    </TreeList>
  </Pane>
);

/* ---------- Status bar ---------- */

const StatusBar = styled.footer`
  display: flex;
  align-items: center;
  height: 25px;
  padding: 0 4px;
  border-top: 1px solid #e1dfdd;
  border-bottom: 1px solid #000;
  color: #484644;
`;

const StatusRight = styled.div`
  display: flex;
  align-items: center;
  margin-left: auto;
`;

const ZoomStep = styled.button`
  width: 10px;
  font-size: 13px;
  line-height: 20px;
`;

const ZoomSlider = styled.input`
  appearance: none;
  width: 100px;
  height: 12px;
  margin: 0 4px;
  background:
    linear-gradient(#605e5c, #605e5c) 49px 50% / 1px 5px no-repeat,
    linear-gradient(#605e5c, #605e5c) 0 50% / 100% 1px no-repeat;

  &::-webkit-slider-thumb {
    appearance: none;
    width: 4px;
    height: 11px;
    background: #605e5c;
  }
`;

const ZoomValue = styled.span`
  width: 24px;
  margin: 0 18px 0 12px;
  color: #605e5c;
`;

const UpdateLink = styled.a`
  margin-left: 20px;
  color: #484644;
  text-decoration: none;
`;

const Watermark = styled.div`
  position: fixed;
  right: 15px;
  bottom: 15px;
  z-index: 3;
  display: flex;
  align-items: center;
  justify-content: center;
  width: 242px;
  height: 92px;
  border: 1px solid #dcdcde;
  border-radius: 46px;
  background: #fff;
`;

const rings = [
  { r: 20, s: 3.3, c: "#ee1c25", a: 0 },
  { r: 16.5, s: 2.2, c: "#ee1c25", a: 30 },
  { r: 13, s: 2.3, c: "#636466", a: 0 },
  { r: 10.5, s: 1.4, c: "#636466", a: 30 },
];

const Logo = () => (
  <svg width="182" height="50" viewBox="0 0 182 50" overflow="visible" role="img" aria-label="JSystems">
    {rings.map((k, i) =>
      [0, 1, 2, 3, 4, 5].map((n) => {
        const t = ((n * 60 + k.a) * Math.PI) / 180;
        return <circle key={`${i}-${n}`} cx={20 + k.r * Math.sin(t)} cy={23 - k.r * Math.cos(t)} r={k.s} fill={k.c} />;
      })
    )}
    <g fill="#636466">
      <text x="50" y="34" fontFamily={STRONG_FONT} fontSize="35" fontWeight="600">
        JS<tspan fontSize="27">YSTEMS</tspan>
      </text>
      <text x="82" y="44" fontFamily={STRONG_FONT} fontSize="6" fontWeight="600">INSPIRACJA - WIEDZA - REALIZACJA</text>
    </g>
  </svg>
);

/* ---------- Dialog ---------- */

const Overlay = styled.div`
  position: fixed;
  inset: 0;
  z-index: 2;
  display: flex;
  align-items: center;
  justify-content: center;
`;

const Dialog = styled.section`
  display: flex;
  flex-direction: column;
  width: 880px;
  height: 660px;
  padding: 7px 30px 26px;
  background: #fff;
  border: 1px solid #c0c0c0;
`;

const DialogControls = styled.div`
  display: flex;
  justify-content: flex-end;
  align-items: center;
  gap: 21px;
  height: 12px;
  margin-right: -19px;
`;

const DialogTitle = styled.h1`
  margin: 0 0 13px;
  font-size: 19px;
  line-height: 28px;
  color: #323130;
  ${strong}
`;

const GridBox = styled.div`
  display: flex;
  flex: 1;
  flex-direction: column;
  justify-content: space-between;
  min-height: 0;
  border: 1px solid #c8c8c8;
`;

const GridClip = styled.div`
  overflow: hidden;
`;

const DataTable = styled.table`
  width: 837px;
  table-layout: fixed;
  border-collapse: separate;
  border-spacing: 0;
  font-family: ${STRONG_FONT};
  line-height: 18px;
  color: #3b3a39;
`;

const Th = styled.th<{ $center?: boolean; $active?: boolean }>`
  height: 21px;
  padding: ${(p) => (p.$center ? "0 20px 0 4px" : "0 4px")};
  font-size: 10px;
  font-weight: 600;
  white-space: nowrap;
  text-align: ${(p) => (p.$center ? "center" : "left")};
  background: ${(p) => (p.$active ? "#e6e6e6" : "#f3f3f3")};
  border: solid #dadada;
  border-width: 0 1px 1px 0;
`;

const Td = styled.td<{ $italic?: boolean }>`
  height: 21px;
  padding: 0 0 0 4px;
  overflow: hidden;
  white-space: nowrap;
  font-size: 11px;
  font-style: ${(p) => (p.$italic ? "italic" : "normal")};
  border: solid #cfcfcf;
  border-width: 0 1px 1px 0;
`;

const ScrollBar = styled.div`
  display: flex;
  align-items: center;
  height: 17px;
  padding: 1px 16px 1px 17px;
  background: #f0f0f0;
`;

const ScrollThumb = styled.div`
  width: 729px;
  height: 15px;
  margin: 0 auto 0 9px;
  background: #cdcdcd;
`;

const DialogActions = styled.div`
  display: flex;
  align-items: center;
  justify-content: flex-end;
  gap: 13px;
  margin-top: 20px;
`;

const CombineButton = styled.button`
  display: flex;
  align-items: center;
  justify-content: center;
  gap: 7px;
  width: 62px;
  height: 22px;
  background: ${GREEN};
  color: #fff;
  font-size: 10px;
`;

const DialogButton = styled.button`
  height: 26px;
  padding: 0 13px;
  border: 1px solid #c8c6c4;
  border-bottom: 2px solid #b3b0ad;
  border-radius: 3px;
  background: #fff;
  font-size: 12px;
  color: #323130;
  ${strong}
`;

const columns = [
  { name: "Content", w: 65 },
  { name: "Name", w: 118, center: true },
  { name: "Extension", w: 74 },
  { name: "Date accessed", w: 109, center: true },
  { name: "Date modified", w: 110, center: true },
  { name: "Date created", w: 109, center: true },
  { name: "Attributes", w: 76 },
  { name: "Folder Path", w: 176, center: true },
];
const months = ["01", "02", "03", "04", "05", "06", "07", "08", "09", "10", "11", "12"];

const FolderDialog = () => (
  <Overlay>
    <Dialog role="dialog" aria-labelledby="dialog-title">
      <DialogControls>
        <PlainButton aria-label="Maksymalizuj okno">
          <Icon w={11}><path d="M.5.5h10v10H.5z" stroke="#605e5c" /></Icon>
        </PlainButton>
        <PlainButton aria-label="Zamknij okno">
          <Icon w={11}><path d="M.5.5l10 10M10.500.5l-10 10" stroke="#605e5c" strokeWidth="1.200" /></Icon>
        </PlainButton>
      </DialogControls>
      <DialogTitle id="dialog-title">C:\Nordvella\eksporty_sprzedazy</DialogTitle>
      <GridBox>
        <GridClip>
          <DataTable>
            <colgroup>{columns.map((c) => <col key={c.name} width={c.w} />)}</colgroup>
            <thead>
              <tr>
                {columns.map((c, i) => <Th key={c.name} $center={c.center} $active={i === 0}>{c.name}</Th>)}
              </tr>
            </thead>
            <tbody>
              {months.map((m) => (
                <tr key={m}>
                  <Td>Binary</Td>
                  <Td>sprzedaz_2025_{m}.csv</Td>
                  <Td>.csv</Td>
                  <Td $italic>14.09.2026 11:38:34</Td>
                  <Td $italic>14.09.2026 11:38:10</Td>
                  <Td $italic>14.09.2026 11:38:34</Td>
                  <Td>Record</Td>
                  <Td>C:\Nordvella\eksporty_sprzedazy\</Td>
                </tr>
              ))}
            </tbody>
          </DataTable>
        </GridClip>
        <ScrollBar>
          <PlainButton aria-label="Przewiń w lewo">
            <Icon w={8} h={11}><path d="M6.500.5L2 5.500l4.500 5" stroke="#484644" strokeWidth="2.200" /></Icon>
          </PlainButton>
          <ScrollThumb />
          <PlainButton aria-label="Przewiń w prawo">
            <Icon w={10} h={11}><path d="M1.500.5L6 5.500l-4.500 5" stroke="#484644" strokeWidth="2.200" /></Icon>
          </PlainButton>
        </ScrollBar>
      </GridBox>
      <DialogActions>
        <CombineButton>
          Połącz
          <Icon w={6} h={4}><path d="M0 0h6L3 4z" fill="#4d8f80" /></Icon>
        </CombineButton>
        <DialogButton>Załaduj</DialogButton>
        <DialogButton>Przekształć dane</DialogButton>
        <DialogButton>Anuluj</DialogButton>
      </DialogActions>
    </Dialog>
  </Overlay>
);

/* ---------- App ---------- */

export default function App() {
  return (
    <>
      <GlobalStyle />
      <Shell>
        <TitleBar>
          <QuickActions>
            <QuickButton aria-label="Zapisz">
              <Icon w={16}>
                <path d="M1 1h14v14H3.500L1 12.500zM4 1v5.500h8V1M4.500 15v-5h7v5M7 15v-3" stroke="#fff" strokeWidth="1.300" />
              </Icon>
            </QuickButton>
            <QuickButton disabled aria-label="Cofnij">
              <Icon w={15} h={16}><path d="M1 1v6h6M1.500 6.500C5 2 9 1 12 3.500c3 3 2 6 0 8L7.500 16" stroke="#fff" strokeWidth="1.300" /></Icon>
            </QuickButton>
            <QuickButton disabled aria-label="Ponów">
              <Icon w={15} h={16}><path d="M14 1v6H8M13.500 6.500C10 2 6 1 3 3.500c-3 3-2 6 0 8L7.500 16" stroke="#fff" strokeWidth="1.300" /></Icon>
            </QuickButton>
          </QuickActions>
          <FileTitle>
            nordvella_03_polaczenie • Czas ostatniego zapisu: Dzisiaj o 10:49
            <Icon w={8} h={5}><path d="M0 0h8L4 5z" fill="#fff" /></Icon>
          </FileTitle>
          <Account>
            Zaloguj
            <Icon w={20}>
              <circle cx="10" cy="10" r="10" fill="#fff" />
              <circle cx="10" cy="5.500" r="2.700" stroke="#3b3a39" strokeWidth="1.300" />
              <path d="M4.500 10.500h11c0 4-2 6-5.500 6s-5.500-2-5.500-6z" stroke="#3b3a39" strokeWidth="1.300" />
            </Icon>
          </Account>
          <WindowControls>
            <WindowButton aria-label="Minimalizuj"><Icon w={12}><path d="M1 6.500h10" stroke="#fff" /></Icon></WindowButton>
            <WindowButton aria-label="Maksymalizuj"><Icon w={12}><path d="M1.500 1.500h9v9h-9z" stroke="#fff" /></Icon></WindowButton>
            <WindowButton aria-label="Zamknij"><Icon w={12}><path d="M1 1l10 10M11 1L1 11" stroke="#fff" strokeWidth="1.200" /></Icon></WindowButton>
          </WindowControls>
        </TitleBar>

        <RibbonView />

        <Workspace>
          <SideNav>
            <SideButton $active aria-label="Widok raportu">
              <Icon w={14}><path d="M1 0v13h13M3.500 4h2v7h-2zM7.500 6h2v5h-2zM11.500 1.500h2V11h-2z" stroke="#000" strokeWidth="1.200" /></Icon>
            </SideButton>
            <SideButton aria-label="Widok tabeli">
              <Icon w={17} h={16}><path d="M.5.5h16v15H.5zM.5 3.500h16M.5 7.500h16M.5 11.500h16M6 3v12M11.500 3v12" stroke={MID} /></Icon>
            </SideButton>
            <SideButton aria-label="Widok modelu">
              <Icon w={18}><path d="M.5 5.500h6v7h-6zM.5 8h6M10.500.5h7v7h-7zM10.500 3h7M10.500 10.500h7v7h-7zM10.500 13h7M4 5.500v-3h6.500M4 12.500v3h6.500" stroke={MID} /></Icon>
            </SideButton>
            <SideButton aria-label="Widok zapytań DAX">
              <Icon w={18}>
                <path d="M4.500 10V1.500h6l4 4V12M10.500 1.500v4h4M16.500 7v6c0 2-1 3-2 3.500" stroke={MID} />
                <text x="0" y="17" fontFamily={FONT} fontSize="7" fill="#605e5c">DAX</text>
              </Icon>
            </SideButton>
            <SideButton aria-label="Widok TMDL">
              <Icon w={18}>
                <path d="M4.500 10V1.500h6l4 4V10M10.500 1.500v4h4" stroke={MID} />
                <text x="0" y="17" fontFamily={FONT} fontSize="6" fill="#605e5c">TMDL</text>
              </Icon>
            </SideButton>
          </SideNav>

          <Center>
            <CanvasRow>
              <Canvas>
                <ReportPage>
                  <CanvasText>Zazna</CanvasText>
                </ReportPage>
              </Canvas>
              <FilterPane>
                <PlainButton aria-label="Rozwiń filtry"><Chevrons left /></PlainButton>
                <FilterTitle>
                  <Icon w={12}><path d="M11 1v10L5.500 8H1V4h4.500z" stroke={INK} strokeWidth="1.300" /></Icon>
                  Filtry
                </FilterTitle>
              </FilterPane>
            </CanvasRow>
            <PageBar>
              <ViewButtons>
                <ViewButton $active aria-label="Układ pulpitu">
                  <Icon w={20} h={15}><path d="M1 1h18v10H1zM10 11v3M6 14h8" stroke="#484644" strokeWidth="1.400" /></Icon>
                </ViewButton>
                <ViewButton aria-label="Układ mobilny">
                  <Icon w={14} h={20}><rect x="1" y="1" width="12" height="18" rx="1" stroke="#484644" strokeWidth="1.400" /><path d="M5.500 16.500h3" stroke="#484644" /></Icon>
                </ViewButton>
              </ViewButtons>
              <PagerButton aria-label="Poprzednia strona"><Icon w={5} h={9}><path d="M5 0v9L0 4.500z" fill={GREY} /></Icon></PagerButton>
              <PagerButton aria-label="Następna strona"><Icon w={5} h={9}><path d="M0 0v9l5-4.500z" fill={GREY} /></Icon></PagerButton>
              <PageTab>Strona 1</PageTab>
              <AddPage aria-label="Nowa strona"><Icon w={11}><path d="M5.500 0v11M0 5.500h11" stroke="#fff" strokeWidth="3" /></Icon></AddPage>
            </PageBar>
          </Center>

          <VisualPane />
          <DataPane />
        </Workspace>

        <StatusBar>
          <span>Strona 1 z 1</span>
          <StatusRight>
            <ZoomStep>-</ZoomStep>
            <ZoomSlider type="range" min={0} max={100} defaultValue={35} aria-label="Powiększenie" />
            <ZoomStep>+</ZoomStep>
            <ZoomValue>76%</ZoomValue>
            <PlainButton aria-label="Dopasuj do strony">
              <Icon w={17} h={13}><path d="M.5.5h16v12H.5z" stroke="#605e5c" /><path d="M3.500 5V3.500H6M11 3.500h2.500V5M13.500 8v1.500H11M6 9.500H3.500V8" stroke="#2b6cb0" /></Icon>
            </PlainButton>
            <UpdateLink href="#update">Jest dostępna aktualizacja (kliknij, aby pobrać)</UpdateLink>
          </StatusRight>
        </StatusBar>
      </Shell>
      <FolderDialog />
      <Watermark><Logo /></Watermark>
    </>
  );
}
